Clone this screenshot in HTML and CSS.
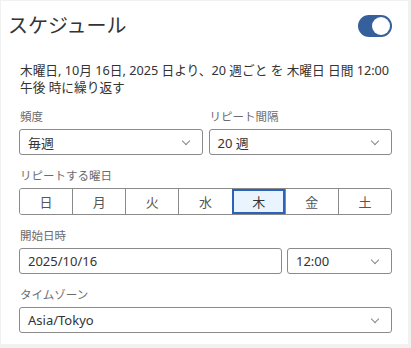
FILE: index.html
```html
<!DOCTYPE html>
<html lang="ja">
<head>
  <meta charset="UTF-8">
  <title>スケジュール</title>
  <link rel="stylesheet" href="styles.css">
</head>
<body>
  <div class="card">
    <header class="card-head">
      <h1>スケジュール</h1>
      <span class="toggle on"><span class="knob"></span></span>
    </header>
    <p class="summary">木曜日, 10月 16日, 2025 日より、20 週ごと を 木曜日 日間 12:00 午後 時に繰り返す</p>

    <div class="row two">
      <div class="field">
        <label>頻度</label>
        <div class="select"><span>毎週</span><i class="chev"></i></div>
      </div>
      <div class="field">
        <label>リピート間隔</label>
        <div class="select"><span>20 週</span><i class="chev"></i></div>
      </div>
    </div>

    <div class="field">
      <label>リピートする曜日</label>
      <div class="days">
        <button>日</button>
        <button>月</button>
        <button>火</button>
        <button>水</button>
        <button class="active">木</button>
        <button>金</button>
        <button>土</button>
      </div>
    </div>

    <div class="field">
      <label>開始日時</label>
      <div class="row start">
        <div class="input">2025/10/16</div>
        <div class="select"><span>12:00</span><i class="chev"></i></div>
      </div>
    </div>

    <div class="field">
      <label>タイムゾーン</label>
      <div class="select"><span>Asia/Tokyo</span><i class="chev"></i></div>
    </div>
  </div>
</body>
</html>
```

FILE: styles.css
```css
:root { --text:#333; --muted:#6b6b6b; --border:#8a8a8a; --blue:#36609b; --accent:#2a63b9; }
body { margin:0; background:#f1f1f1; font-family:"Noto Sans", "Noto Sans CJK JP", sans-serif; color:var(--text); }
.card { box-sizing:border-box; width:407px; height:343px; margin:1px 0 0 1px; background:#fff; padding:12px 16px 0 18px; }
.card-head { display:flex; align-items:center; justify-content:space-between; margin-left:-11px; }
.card-head h1 { margin:0; font-size:20px; font-weight:400; line-height:26px; color:#333; }
.toggle { width:34px; height:22px; border-radius:11px; background:var(--blue); position:relative; }
.toggle .knob { position:absolute; right:2px; top:2px; width:18px; height:18px; border-radius:50%; background:#fff; }
.summary { margin:23px 0 13px 1px; font-size:12.7px; line-height:17px; }
.row { display:flex; gap:6px; }
.two .field { flex:1; }
.start { gap:5px; }
.field { display:flex; flex-direction:column; margin-bottom:13px; }
.field label { font-size:11.5px; color:var(--muted); line-height:16px; margin:0 0 4px 1px; }
.select, .input { box-sizing:border-box; height:26px; border:1px solid var(--border); border-radius:3px; display:flex; align-items:center; justify-content:space-between; padding:0 13px 0 8px; font-size:13px; color:var(--text); }
.start .input { flex:1; }
.start .select { width:105px; }
.chev { width:5px; height:5px; border-right:1px solid #888; border-bottom:1px solid #888; transform:rotate(45deg); margin-top:-3px; }
.days { display:flex; height:25px; border:1px solid var(--border); border-radius:3px; overflow:hidden; }
.days button { flex:1; border:none; border-left:1px solid var(--border); background:#fff; font:inherit; font-size:13px; color:#555; padding:0; }
.days button:first-child { border-left:none; }
.days button.active { background:#eaf4fe; outline:2px solid var(--accent); outline-offset:-2px; color:#333; }
```
